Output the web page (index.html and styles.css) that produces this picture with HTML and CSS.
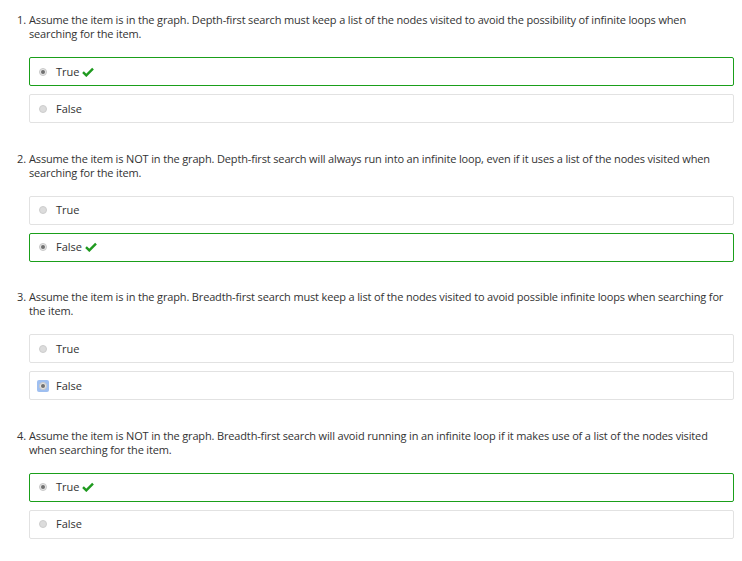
FILE: index.html
```html
<!DOCTYPE html>
<html>
<head>
<meta charset="utf-8">
<link rel="stylesheet" href="styles.css">
</head>
<body>
<div class="quiz">
  <div class="question">
    <div class="prompt"><span class="num">1.</span><span class="qtext">Assume the item is in the graph. Depth-first search must keep a list of the nodes visited to avoid the possibility of infinite loops when searching for the item.</span></div>
    <div class="options">
      <div class="option correct"><span class="radio checked"></span><span class="label">True</span><svg class="check" viewBox="0 0 12 10" width="12" height="10"><path d="M1 5.2 L4.3 8.4 L11 1.6" fill="none" stroke="#1f9a1f" stroke-width="2.4"/></svg></div>
      <div class="option"><span class="radio"></span><span class="label">False</span></div>
    </div>
  </div>
  <div class="question">
    <div class="prompt"><span class="num">2.</span><span class="qtext">Assume the item is NOT in the graph. Depth-first search will always run into an infinite loop, even if it uses a list of the nodes visited when searching for the item.</span></div>
    <div class="options">
      <div class="option"><span class="radio"></span><span class="label">True</span></div>
      <div class="option correct"><span class="radio checked"></span><span class="label">False</span><svg class="check" viewBox="0 0 12 10" width="12" height="10"><path d="M1 5.2 L4.3 8.4 L11 1.6" fill="none" stroke="#1f9a1f" stroke-width="2.4"/></svg></div>
    </div>
  </div>
  <div class="question">
    <div class="prompt"><span class="num">3.</span><span class="qtext">Assume the item is in the graph. Breadth-first search must keep a list of the nodes visited to avoid possible infinite loops when searching for the item.</span></div>
    <div class="options">
      <div class="option"><span class="radio"></span><span class="label">True</span></div>
      <div class="option"><span class="focus-ring"><span class="radio checked"></span></span><span class="label">False</span></div>
    </div>
  </div>
  <div class="question">
    <div class="prompt"><span class="num">4.</span><span class="qtext">Assume the item is NOT in the graph. Breadth-first search will avoid running in an infinite loop if it makes use of a list of the nodes visited when searching for the item.</span></div>
    <div class="options">
      <div class="option correct"><span class="radio checked"></span><span class="label">True</span><svg class="check" viewBox="0 0 12 10" width="12" height="10"><path d="M1 5.2 L4.3 8.4 L11 1.6" fill="none" stroke="#1f9a1f" stroke-width="2.4"/></svg></div>
      <div class="option"><span class="radio"></span><span class="label">False</span></div>
    </div>
  </div>
</div>
</body>
</html>
```
FILE: styles.css
```css
html, body {
  margin: 0;
  padding: 0;
  background: #ffffff;
}
body {
  font-family: "Open Sans", "Liberation Sans", sans-serif;
  font-size: 11px;
  color: #333333;
}
.quiz {
  display: flex;
  flex-direction: column;
  gap: 28.5px;
  padding: 13px 8px 0 17px;
  width: 717px;
}
.prompt {
  display: flex;
  line-height: 14px;
  letter-spacing: -0.15px;
}
.num {
  flex: 0 0 12px;
}
.qtext {
  flex: 1;
}
.options {
  display: flex;
  flex-direction: column;
  gap: 8px;
  margin: 16px 0 0 12px;
}
.option {
  height: 27px;
  border: 1px solid #e2e2e2;
  border-radius: 2px;
  display: flex;
  align-items: center;
  padding-left: 9px;
}
.option.correct {
  border-color: #1a9f1a;
}
.radio {
  width: 8px;
  height: 8px;
  border-radius: 50%;
  background: #dcdcdc;
  border: 1px solid #cdcdcd;
  box-sizing: border-box;
  position: relative;
  flex: 0 0 auto;
}
.radio.checked {
  background: #e6e6e6;
  border: 1px solid #c8c8c8;
}
.radio.checked::after {
  content: "";
  position: absolute;
  left: 1px;
  top: 1px;
  width: 4px;
  height: 4px;
  border-radius: 50%;
  background: #707070;
}
.focus-ring {
  display: flex;
  margin: -2px;
  padding: 2px;
  border-radius: 2px;
  background: #9fbff0;
}
.label {
  margin-left: 9px;
  line-height: 14px;
}
.check {
  margin-left: 3px;
}
```
